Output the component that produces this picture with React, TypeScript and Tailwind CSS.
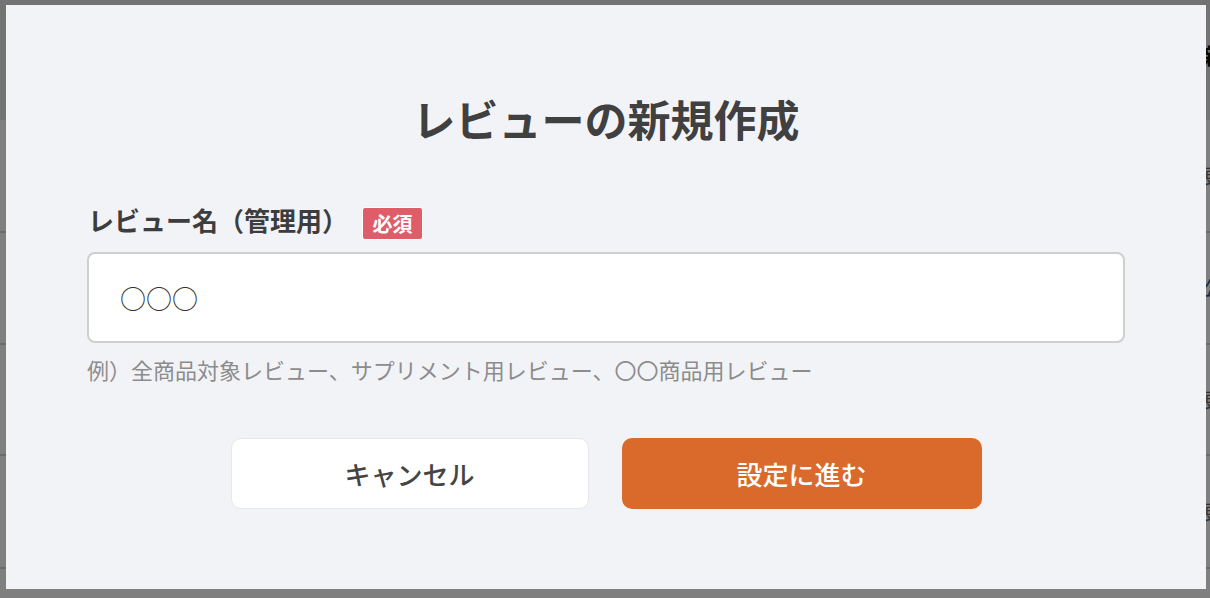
import React from "react";

const font = { fontFamily: '"Noto Sans CJK JP", "Noto Sans", sans-serif' };

// rows of the list page that sits behind the dialog
const rows = [
  { h: "h-[113px]", text: "更新", tone: "text-[#666]" },
  { h: "h-[112px]", text: "公開", tone: "text-[#2a5a9a]" },
  { h: "h-[111px]", text: "更新", tone: "text-[#666]" },
  { h: "h-[113px]", text: "更新", tone: "text-[#666]" },
];

function BackgroundPage() {
  return (
    <div className="flex flex-col h-[598px] bg-white overflow-hidden">
      <div className="flex h-[120px] shrink-0 bg-[#e6e6e6] items-center">
        <div className="flex-1" />
        <div className="w-[7px] overflow-hidden whitespace-nowrap text-[22px] font-bold text-[#111] mb-[12px]">
          新規
        </div>
      </div>
      {rows.map((r, i) => (
        <div key={i} className={`flex ${r.h} shrink-0 border-b-2 border-[#d6d6d6] items-center`}>
          <div className="flex-1" />
          <div className={`w-[7px] overflow-hidden whitespace-nowrap text-[20px] ${r.tone}`}>{r.text}</div>
        </div>
      ))}
    </div>
  );
}

export default function App() {
  return (
    <div className="relative w-[1210px] h-[598px] overflow-hidden" style={font}>
      <BackgroundPage />
      <div className="absolute inset-0 bg-black/50 flex items-start pl-[6px] pt-[5px]">
        <div className="w-[1200px] h-[584px] bg-[#f2f3f7] flex flex-col px-[81px] pt-[92px]">
          <h1 className="text-[43px] leading-none font-bold text-[#404040] text-center">
            レビューの新規作成
          </h1>

          <div className="flex items-start h-[34px] mt-[66px]">
            <span className="text-[26px] leading-none font-bold text-[#3d3d3d] ml-[1px] mt-[1px]">
              レビュー名（管理用）
            </span>
            <span className="ml-[14px] mt-[1px] h-[33px] w-[61px] flex items-center justify-center rounded-[3px] border border-white bg-[#df5c69] text-white text-[20px] leading-none font-bold">
              必須
            </span>
          </div>

          <input
            defaultValue="○○○"
            className="mt-[12px] h-[91px] w-full rounded-[8px] border-2 border-[#cfcfcf] bg-white pl-[31px] text-[26px] text-[#333] outline-none"
            style={font}
          />

          <p className="mt-[15px] text-[22px] leading-none text-[#8c8c8c]">
            例）全商品対象レビュー、サプリメント用レビュー、〇〇商品用レビュー
          </p>

          <div className="flex justify-center gap-[33px] mt-[58px]">
            <button
              className="w-[358px] h-[71px] rounded-[10px] border border-[#e6e7ea] bg-white text-[26px] text-[#444] font-medium"
              style={font}
            >
              キャンセル
            </button>
            <button
              className="w-[360px] h-[71px] rounded-[10px] bg-[#da6a2b] text-[26px] text-white font-medium"
              style={font}
            >
              設定に進む
            </button>
          </div>
        </div>
      </div>
    </div>
  );
}
